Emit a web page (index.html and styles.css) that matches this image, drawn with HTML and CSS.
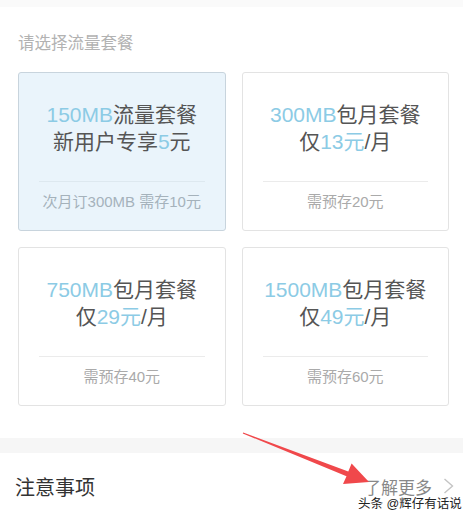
FILE: index.html
```html
<!DOCTYPE html>
<html>

<head>
  <meta charset="utf-8">
  <link rel="stylesheet" href="styles.css">
</head>

<body>
  <div class="page">
    <div class="topBar"></div>

    <div class="plans">
      <h2 class="plansTitle">请选择流量套餐</h2>

      <div class="planGrid">
        <div class="plan active">
          <div class="planName"><span class="hl">150MB</span>流量套餐</div>
          <div class="planName">新用户专享<span class="hl">5</span>元</div>
          <div class="planNote">次月订300MB 需存10元</div>
        </div>
        <div class="plan">
          <div class="planName"><span class="hl">300MB</span>包月套餐</div>
          <div class="planName">仅<span class="hl">13元</span>/月</div>
          <div class="planNote">需预存20元</div>
        </div>
        <div class="plan">
          <div class="planName"><span class="hl">750MB</span>包月套餐</div>
          <div class="planName">仅<span class="hl">29元</span>/月</div>
          <div class="planNote">需预存40元</div>
        </div>
        <div class="plan">
          <div class="planName"><span class="hl">1500MB</span>包月套餐</div>
          <div class="planName">仅<span class="hl">49元</span>/月</div>
          <div class="planNote">需预存60元</div>
        </div>
      </div>
    </div>

    <div class="divider"></div>

    <div class="notice">
      <span class="noticeTitle">注意事项</span>
      <span class="more">了解更多
        <svg class="chevron" width="11" height="16" viewBox="0 0 11 16">
          <polyline points="1.5,1 9.5,8 1.5,15" fill="none" stroke="#c4c4c4" stroke-width="1.4"/>
        </svg>
      </span>
    </div>

    <!-- annotation drawn over the screenshot -->
    <svg class="arrow" width="135" height="60" viewBox="0 0 135 60">
      <polygon points="3.2,4.5 108.3,43.6 111.6,35.6 129,54 103,56 106.5,48.2 2.8,5.5" fill="#f0484b"/>
    </svg>
    <span class="watermark">头条 @辉仔有话说</span>
  </div>
</body>

</html>
```

FILE: styles.css
```css
* {
  margin: 0;
  padding: 0;
  box-sizing: border-box;
}

body {
  background-color: #fff;
  font-family: "Liberation Sans", "Noto Sans CJK SC", sans-serif;
}

.page {
  position: relative;
  width: 467px;
  height: 517px;
  overflow: hidden;
}

.topBar {
  height: 7px;
  margin-right: 4px;
  background-color: #fafafa;
}

.plans {
  padding: 25px 18px 0 18px;
}

.plansTitle {
  margin-bottom: 18px;
  font-size: 16.5px;
  line-height: 22px;
  font-weight: normal;
  color: #b2b2b2;
}

.planGrid {
  display: grid;
  grid-template-columns: 1fr 1fr;
  gap: 16px;
}

.plan {
  height: 159px;
  padding: 28px 18px 0 18px;
  border: 1px solid #e3e3e3;
  border-radius: 3px;
  text-align: center;
  background-color: #fff;
}

.plan.active {
  border-color: #c8d4dd;
  background-color: #eaf4fb;
}

.planName {
  font-size: 21px;
  line-height: 27px;
  color: #555;
}

.hl {
  color: #8ccbe5;
}

.planNote {
  margin: 26px 2px 0 2px;
  padding-top: 10px;
  border-top: 1px solid #ebebeb;
  font-size: 15px;
  line-height: 20px;
  color: #aaa;
}

.plan.active .planNote {
  border-top-color: #dde8ef;
  color: #a5b2bb;
}

.divider {
  height: 15px;
  margin-top: 32px;
  margin-right: 4px;
  background-color: #f6f6f6;
}

.notice {
  display: flex;
  justify-content: space-between;
  align-items: center;
  height: 66px;
  padding: 0 13px 0 15px;
}

.noticeTitle {
  font-size: 20px;
  color: #333;
}

.more {
  display: flex;
  align-items: center;
  gap: 11px;
  font-size: 17px;
  color: #888;
}

.arrow {
  position: absolute;
  left: 240px;
  top: 428px;
}

.watermark {
  position: absolute;
  left: 358px;
  top: 493px;
  font-size: 12.5px;
  color: #222;
  text-shadow: 0 0 2px #fff, 0 0 2px #fff, 0 0 2px #fff;
}
```
